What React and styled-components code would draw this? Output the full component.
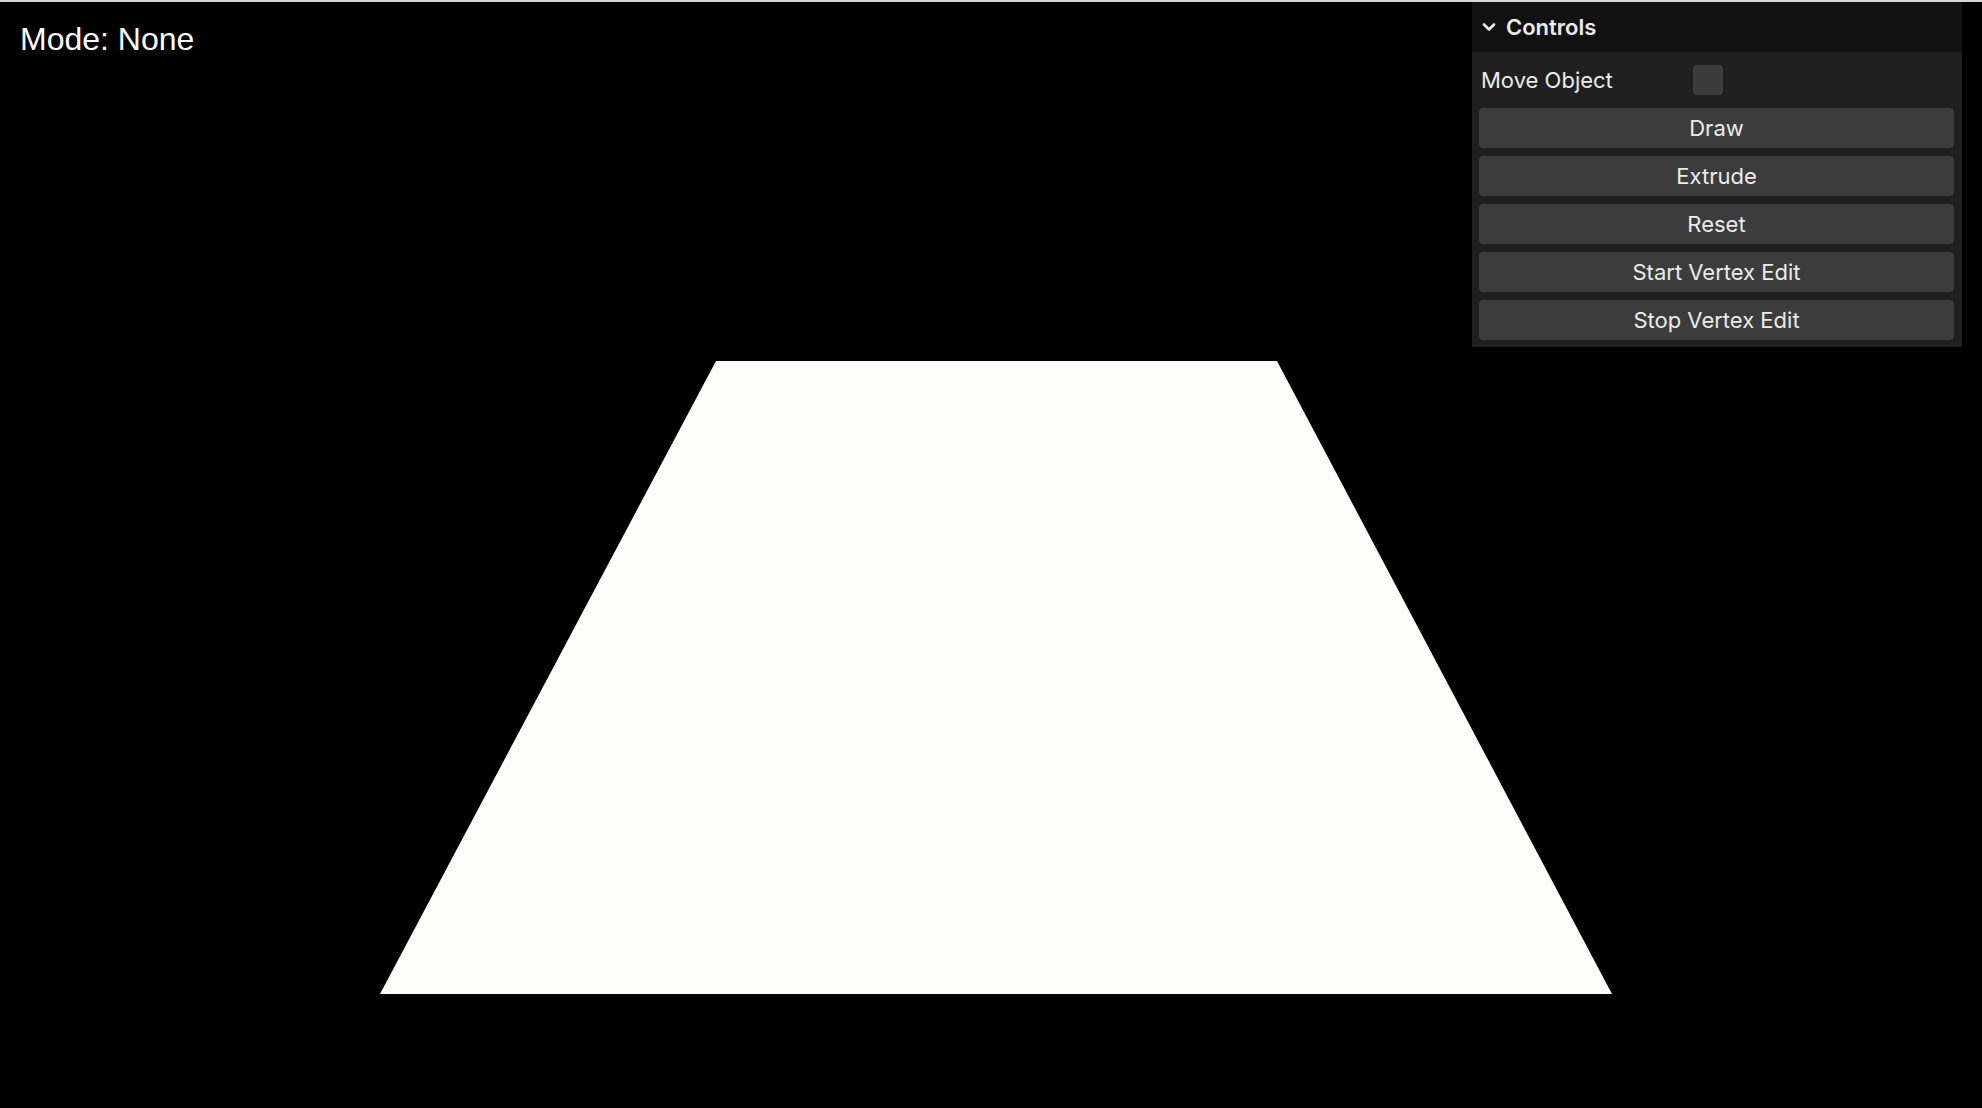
import React from "react";
import styled, { createGlobalStyle } from "styled-components";

const Global = createGlobalStyle`
  html, body { margin: 0; padding: 0; background: #000; overflow: hidden; }
  #root { width: 100vw; height: 100vh; }
`;

const Viewport = styled.div`
  position: relative;
  width: 100%;
  height: 100%;
  background: #000;
  border-top: 2px solid #d9d9d2;
  box-sizing: border-box;
  overflow: hidden;
`;

const Canvas = styled.svg`
  display: block;
  width: 100%;
  height: 100%;
`;

const ModeLabel = styled.div`
  position: absolute;
  top: 19px;
  left: 20px;
  font-family: "Liberation Sans", Arial, sans-serif;
  font-size: 32px;
  color: #fff;
`;

const Panel = styled.div`
  position: absolute;
  top: 0;
  right: 20px;
  width: 490px;
  background: #1f1f1f;
  font-family: Inter, "Noto Sans", sans-serif;
  color: #ebebeb;
`;

const Title = styled.div`
  height: 50px;
  background: #111;
  display: flex;
  align-items: center;
  gap: 10px;
  padding-left: 10px;
  font-size: 22px;
  font-weight: 600;
`;

const Body = styled.div`
  display: flex;
  flex-direction: column;
  gap: 8px;
  padding: 8px 8px 7px 7px;
`;

const Row = styled.label`
  display: flex;
  align-items: center;
  height: 40px;
`;

const Name = styled.span`
  width: 45%;
  padding-left: 2px;
  box-sizing: border-box;
  font-size: 22px;
`;

const Check = styled.span`
  width: 30px;
  height: 30px;
  border-radius: 4px;
  background: #3b3b3b;
`;

const Button = styled.button`
  height: 40px;
  border: none;
  border-radius: 4px;
  background: #3c3c3c;
  color: #ebebeb;
  font-family: Inter, "Noto Sans", sans-serif;
  font-size: 22px;
  cursor: pointer;
  padding: 0;
`;

const Chevron = () => (
  <svg width="14" height="10" viewBox="0 0 14 10">
    <path d="M2 2.5 L7 7.5 L12 2.5" fill="none" stroke="#ebebeb" strokeWidth="2.6" strokeLinecap="round" strokeLinejoin="round" />
  </svg>
);

const buttons = ["Draw", "Extrude", "Reset", "Start Vertex Edit", "Stop Vertex Edit"];

export default function App() {
  return (
    <>
      <Global />
      <Viewport>
        <Canvas viewBox="0 0 1982 1106" preserveAspectRatio="none">
          <polygon points="716,359 1277,359 1612,992 380,992" fill="#fcfcfa" />
        </Canvas>
        <ModeLabel>Mode: None</ModeLabel>
        <Panel>
          <Title>
            <Chevron />
            Controls
          </Title>
          <Body>
            <Row>
              <Name>Move Object</Name>
              <Check />
            </Row>
            {buttons.map((b) => (
              <Button key={b}>{b}</Button>
            ))}
          </Body>
        </Panel>
      </Viewport>
    </>
  );
}
